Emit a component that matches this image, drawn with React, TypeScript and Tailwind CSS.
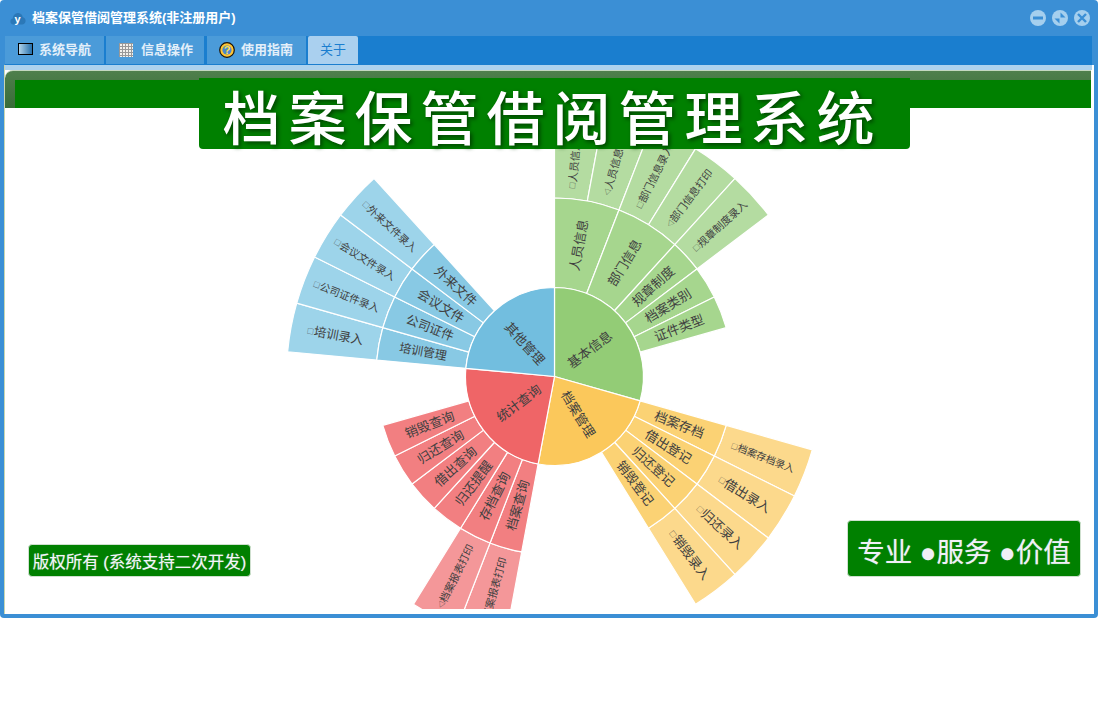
const CX = 554.5;
const CY = 376.5;
const UNIT = 360 / 34;
const R1 = 89;
const R2 = 178.5;
const R3 = 268;

type Slice = { name: string; start: number; units: number; size?: number };

const FONT = '"Liberation Sans", "Noto Sans CJK SC", sans-serif';

const point = (r: number, deg: number) => {
  const a = (deg * Math.PI) / 180;
  return [CX + r * Math.sin(a), CY - r * Math.cos(a)];
};

const arc = (r0: number, r1: number, from: number, to: number) => {
  const [ax, ay] = point(r0, from);
  const [bx, by] = point(r1, from);
  const [cx, cy] = point(r1, to);
  const [dx, dy] = point(r0, to);
  if (r0 === 0) return `M${CX} ${CY}L${bx} ${by}A${r1} ${r1} 0 0 1 ${cx} ${cy}Z`;
  return `M${ax} ${ay}L${bx} ${by}A${r1} ${r1} 0 0 1 ${cx} ${cy}L${dx} ${dy}A${r0} ${r0} 0 0 0 ${ax} ${ay}Z`;
};

const inner: (Slice & { color: string })[] = [
  { name: "基本信息", start: 0, units: 10, color: "#93cc76" },
  { name: "档案管理", start: 10, units: 8, color: "#fbc85b" },
  { name: "统计查询", start: 18, units: 8, color: "#ef6567" },
  { name: "其他管理", start: 26, units: 8, color: "#72bedf" },
];

const middle: (Slice & { color: string })[] = [
  { name: "人员信息", start: 0, units: 2, color: "#a6d68e" },
  { name: "部门信息", start: 2, units: 2, color: "#a6d68e" },
  { name: "规章制度", start: 4, units: 1, color: "#a6d68e" },
  { name: "档案类别", start: 5, units: 1, color: "#a6d68e" },
  { name: "证件类型", start: 6, units: 1, color: "#a6d68e" },
  { name: "档案存档", start: 10, units: 1, color: "#fbd274" },
  { name: "借出登记", start: 11, units: 1, color: "#fbd274" },
  { name: "归还登记", start: 12, units: 1, color: "#fbd274" },
  { name: "销毁登记", start: 13, units: 1, color: "#fbd274" },
  { name: "档案查询", start: 18, units: 1, color: "#f27f81" },
  { name: "存档查询", start: 19, units: 1, color: "#f27f81" },
  { name: "归还提醒", start: 20, units: 1, color: "#f27f81" },
  { name: "借出查询", start: 21, units: 1, color: "#f27f81" },
  { name: "归还查询", start: 22, units: 1, color: "#f27f81" },
  { name: "销毁查询", start: 23, units: 1, color: "#f27f81" },
  { name: "培训管理", start: 26, units: 1, size: 12, color: "#88c9e4" },
  { name: "公司证件", start: 27, units: 1, size: 12.5, color: "#88c9e4" },
  { name: "会议文件", start: 28, units: 1, color: "#88c9e4" },
  { name: "外来文件", start: 29, units: 1, color: "#88c9e4" },
];

const outer: (Slice & { color: string; mark: string })[] = [
  { name: "人员信息录入", mark: "□", start: 0, units: 1, size: 10.5, color: "#b4dca1" },
  { name: "人员信息打印", mark: "◁", start: 1, units: 1, size: 10.5, color: "#b4dca1" },
  { name: "部门信息录入", mark: "□", start: 2, units: 1, size: 10.5, color: "#b4dca1" },
  { name: "部门信息打印", mark: "◁", start: 3, units: 1, size: 10.5, color: "#b4dca1" },
  { name: "规章制度录入", mark: "□", start: 4, units: 1, size: 10.5, color: "#b4dca1" },
  { name: "档案存档录入", mark: "□", start: 10, units: 1, size: 10, color: "#fcd98c" },
  { name: "借出录入", mark: "□", start: 11, units: 1, size: 13, color: "#fcd98c" },
  { name: "归还录入", mark: "□", start: 12, units: 1, size: 13, color: "#fcd98c" },
  { name: "销毁录入", mark: "□", start: 13, units: 1, size: 13, color: "#fcd98c" },
  { name: "档案报表打印", mark: "◁", start: 18, units: 1, size: 10.5, color: "#f49799" },
  { name: "档案报表打印", mark: "◁", start: 19, units: 1, size: 10.5, color: "#f49799" },
  { name: "培训录入", mark: "□", start: 26, units: 1, size: 12.5, color: "#9dd4ea" },
  { name: "公司证件录入", mark: "□", start: 27, units: 1, size: 10.5, color: "#9dd4ea" },
  { name: "会议文件录入", mark: "□", start: 28, units: 1, size: 10.5, color: "#9dd4ea" },
  { name: "外来文件录入", mark: "□", start: 29, units: 1, size: 10.5, color: "#9dd4ea" },
];

function Label({ s, r, mark }: { s: Slice; r: number; mark?: string }) {
  const mid = (s.start + s.units / 2) * UNIT;
  const [x, y] = point(r, mid);
  const rot = mid < 180 ? mid - 90 : mid + 90;
  return (
    <text
      x={x}
      y={y}
      transform={`rotate(${rot} ${x} ${y})`}
      textAnchor="middle"
      dominantBaseline="central"
      fill="#404040"
      fontSize={s.size ?? 13}
      fontFamily={FONT}
    >
      {mark && <tspan fontSize={7} fontFamily='"Noto Sans CJK SC", sans-serif'>{mark}</tspan>}
      {s.name}
    </text>
  );
}

function Sunburst() {
  return (
    <svg width={1098} height={609} className="block">
      {[...outer.map((s) => ({ s, a: R2, b: R3 })), ...middle.map((s) => ({ s, a: R1, b: R2 })), ...inner.map((s) => ({ s, a: 0, b: R1 }))].map(({ s, a, b }) => (
        <path key={`${s.name}${s.start}${a}`} d={arc(a, b, s.start * UNIT, (s.start + s.units) * UNIT)} fill={s.color} stroke="#ffffff" strokeWidth={1.2} strokeLinejoin="round" />
      ))}
      {inner.map((s) => <Label key={s.name} s={s} r={44.5} />)}
      {middle.map((s) => <Label key={s.name} s={s} r={(R1 + R2) / 2} />)}
      {outer.map((s) => <Label key={`${s.name}${s.start}`} s={s} r={(R2 + R3) / 2} mark={s.mark} />)}
    </svg>
  );
}

function LogoIcon() {
  return (
    <svg width={16} height={13} viewBox="0 0 16 13">
      <path d="M3.500 12.500C1.500 12.500 .3 11 .4 9.300 .5 7.700 1.500 6.700 2.800 6.400 3 3 5.700 .8 8.400 1c2.300.2 4 1.900 4.300 4 1.900.6 3 2.300 2.900 4.100-.2 2-1.600 3.400-3.500 3.400Z" fill="#2b78b8" />
      <text x="7.500" y="10.500" textAnchor="middle" fontSize={11} fontWeight={700} fill="#ffffff" fontFamily={FONT}>y</text>
    </svg>
  );
}

function MonitorIcon() {
  return (
    <svg width={15} height={12} viewBox="0 0 15 12" className="-mt-[2px]">
      <defs>
        <linearGradient id="screen" x1="0" x2="1" y1="0" y2="0">
          <stop offset="0" stopColor="#b6d8ee" />
          <stop offset="1" stopColor="#1e6aa8" />
        </linearGradient>
      </defs>
      <rect x=".5" y=".5" width="14" height="11" fill="url(#screen)" stroke="#000000" />
    </svg>
  );
}

function GridIcon() {
  const cells = [0, 1, 2, 3, 4];
  return (
    <svg width={14} height={14} viewBox="0 0 14 14">
      <rect width="14" height="14" fill="#f3f1ec" />
      {cells.map((i) => (
        <g key={i}>
          <rect x={i * 3} width="1" height="14" fill="#999999" />
          <rect y={i * 3} width="14" height="1" fill="#999999" />
        </g>
      ))}
    </svg>
  );
}

function HelpIcon() {
  return (
    <svg width={16} height={16} viewBox="0 0 16 16">
      <circle cx="8" cy="8" r="7.300" fill="#ffc533" stroke="#1a1208" strokeWidth="1.200" />
      <circle cx="8" cy="8" r="4.600" fill="#4a86d0" />
      <text x="8" y="11.800" textAnchor="middle" fontSize={11} fontWeight={700} fill="#ffe04a" fontFamily={FONT}>?</text>
    </svg>
  );
}

function WinButton({ kind }: { kind: "min" | "restore" | "close" }) {
  return (
    <svg width={16} height={16} viewBox="0 0 16 16">
      <circle cx="8" cy="8" r="8" fill="#a5cfee" />
      {kind === "min" && <rect x="3" y="6.500" width="10" height="3" fill="#3b8fd5" />}
      {kind === "restore" && (
        <>
          <path d="M8.500 2.500 13.500 7.500H8.500Z" fill="#3b8fd5" />
          <path d="M7.500 13.500 2.500 8.500H7.500Z" fill="#3b8fd5" />
        </>
      )}
      {kind === "close" && <path d="M4 4 12 12M12 4 4 12" stroke="#3b8fd5" strokeWidth="2.400" />}
    </svg>
  );
}

const tabs = [
  { label: "系统导航", icon: <MonitorIcon />, width: "w-[99px]", pad: "pl-[13px]", gap: "gap-[6px]" },
  { label: "信息操作", icon: <GridIcon />, width: "w-[98px]", pad: "pl-[13px]", gap: "gap-[8px]" },
  { label: "使用指南", icon: <HelpIcon />, width: "w-[99px] ml-[1px]", pad: "pl-[12px]", gap: "gap-[6px]" },
];

export default function App() {
  return (
    <div className="h-[723px] w-[1099px] overflow-hidden bg-white" style={{ fontFamily: FONT }}>
      <div className="flex h-[618px] w-[1098px] flex-col rounded-[4px] bg-[#3b8fd5] px-[4px] pb-[4px]">
        <div className="flex h-[36px] shrink-0 items-center pl-[6px] pr-[4px]">
          <LogoIcon />
          <span className="ml-[6px] text-[13px] font-bold text-white">档案保管借阅管理系统(非注册用户)</span>
          <div className="ml-auto flex gap-[6px]">
            <WinButton kind="min" />
            <WinButton kind="restore" />
            <WinButton kind="close" />
          </div>
        </div>

        <div className="ml-[1px] mr-[2px] flex h-[29px] shrink-0 gap-[2px] bg-[#1a7ecf] pb-[1px]">
          {tabs.map((t) => (
            <div key={t.label} className={`flex items-center bg-[#4b9bd9] ${t.width} ${t.pad} ${t.gap}`}>
              {t.icon}
              <span className="text-[13px] font-bold text-[#e3eff9]">{t.label}</span>
            </div>
          ))}
          <div className="flex w-[50px] items-center justify-center rounded-t-[2px] bg-[#aad0ef] text-[13px] text-[#1a7ecf]">关于</div>
        </div>

        <div className="relative flex min-h-0 flex-1 flex-col border-l border-[#c9d6b0] bg-white">
          <div className="mr-[2px] h-[5px] shrink-0 bg-[#add2ee]" />
          <div className="mr-[3px] h-[38px] shrink-0 rounded-tl-[8px] border-t border-[#c4d8c0] bg-gradient-to-b from-[#4f7f4c] to-[#386c38] pl-[10px] pt-[9px]">
            <div className="h-[28px] bg-[#008000]" />
          </div>

          <div className="absolute left-[-5px] top-[-65px]">
            <Sunburst />
          </div>

          <div className="absolute left-[194px] top-[13px] flex h-[71px] w-[711px] items-center justify-center rounded-b-[4px] bg-[#008000] pr-[4px] pt-[13px]">
            <span className="text-[58px] font-medium leading-none tracking-[8px] text-white [text-shadow:2px_2px_4px_#004000]">档案保管借阅管理系统</span>
          </div>
          <div className="absolute left-[23px] top-[479px] flex h-[33px] w-[223px] items-center justify-center rounded-[4px] border border-[#cfe0cf] bg-[#008000] pt-[3px] text-[16.5px] text-[#f4f4fa] [text-shadow:0_0_1px_#ffffff80]">
            版权所有 (系统支持二次开发)
          </div>
          <div className="absolute left-[842px] top-[455px] flex h-[57px] w-[234px] items-center justify-center whitespace-pre rounded-[4px] border border-[#cfe0cf] bg-[#008000] pt-[8px] text-[27.5px] text-[#f0f0f8] [text-shadow:0_0_1px_#ffffff80]">
            专业 ●服务 ●价值
          </div>
        </div>
      </div>
    </div>
  );
}
